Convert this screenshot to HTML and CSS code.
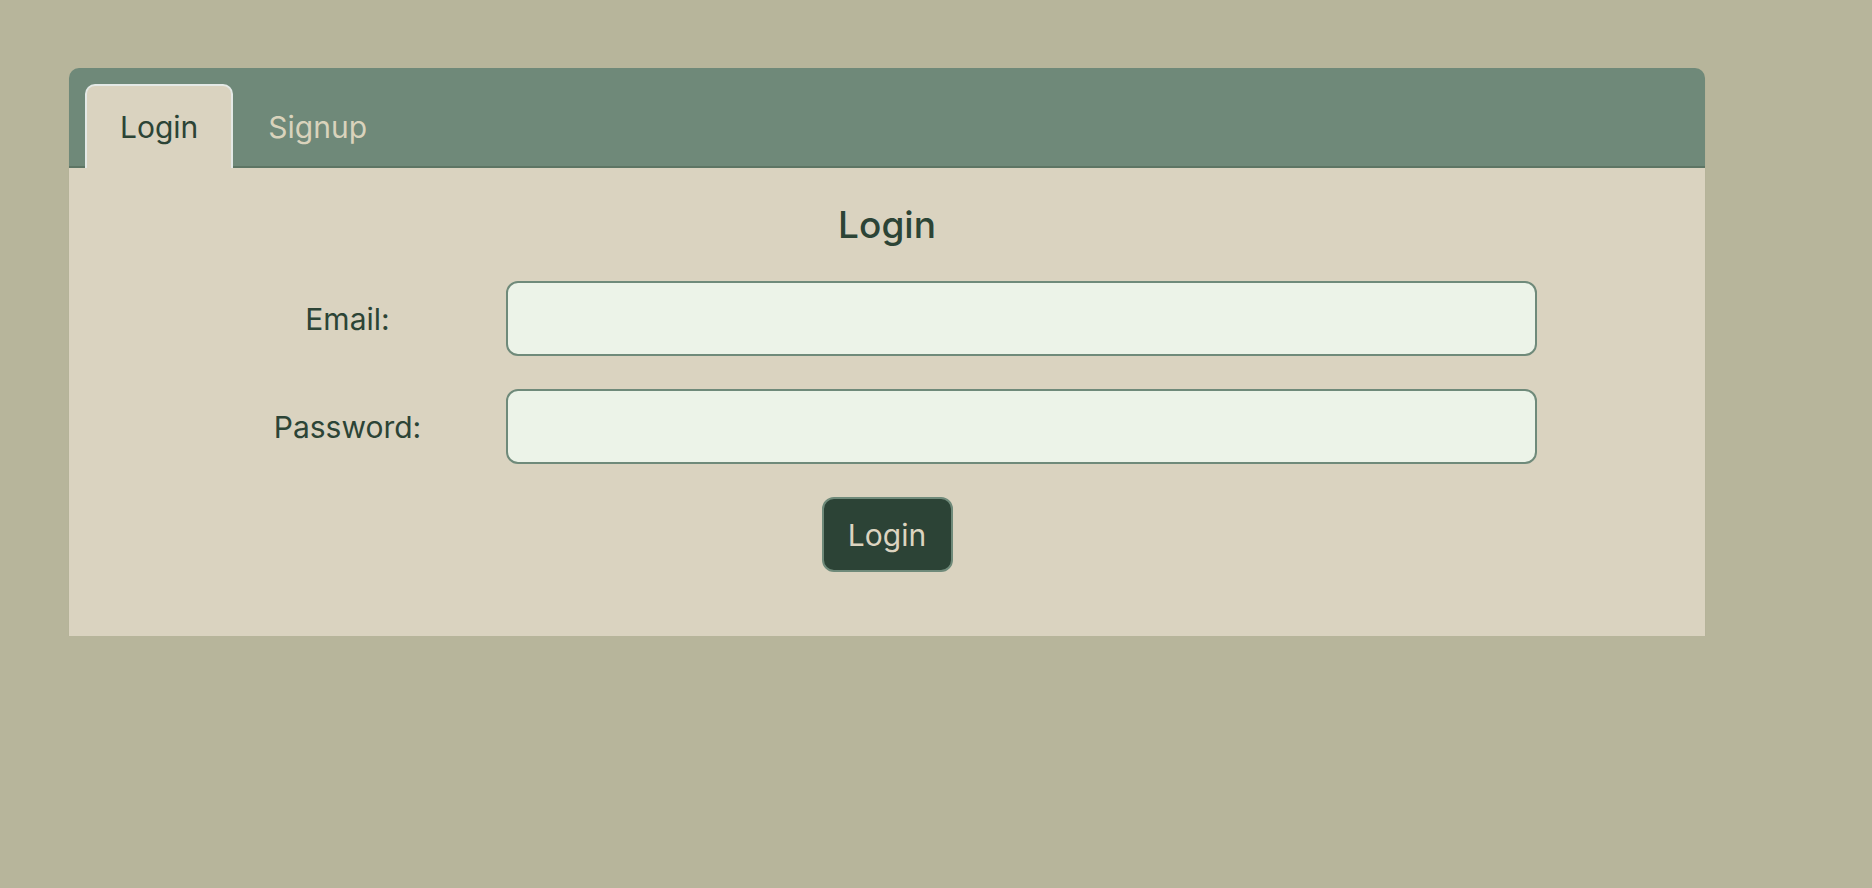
FILE: index.html
```html
<!DOCTYPE html>
<html lang="en">
<head>
<meta charset="utf-8">
<title>Login</title>
<link rel="stylesheet" href="styles.css">
</head>
<body>
<div class="page">
  <div class="card">
    <div class="tabs">
      <div class="tab active">Login</div>
      <div class="tab">Signup</div>
    </div>
    <div class="panel">
      <h2 class="title">Login</h2>
      <form class="form">
        <label class="label" for="email">Email:</label>
        <input class="input" id="email" type="email">
        <label class="label" for="password">Password:</label>
        <input class="input" id="password" type="password">
        <button class="btn" type="button">Login</button>
      </form>
    </div>
  </div>
</div>
</body>
</html>
```
FILE: styles.css
```css
* { box-sizing: border-box; }
html, body { margin: 0; }
body {
  background: #b7b59b;
  font-family: Inter, "Noto Sans", sans-serif;
  color: #2c4436;
}
.page { padding: 68px 0 0 69px; }
.card {
  width: 1636px;
  box-shadow: 0 1px 1px rgba(0,0,0,0.08);
  border-radius: 10px 10px 0 0;
}
.tabs {
  height: 100px;
  background: #6f8979;
  border-bottom: 2px solid #5d7564;
  border-radius: 10px 10px 0 0;
  padding: 16px 16px 0;
  display: flex;
  align-items: flex-end;
}
.tab {
  height: 84px;
  margin-bottom: -2px;
  padding: 0 33px;
  border: 2px solid transparent;
  border-bottom: none;
  border-radius: 10px 10px 0 0;
  display: flex;
  align-items: center;
  font-size: 30px;
  color: #d9d3bc;
}
.tab.active {
  background: #dad3c0;
  border-color: #e4e9e6;
  color: #2c4436;
}
.panel {
  background: #dad3c0;
  height: 468px;
  padding: 35px 0 65px;
}
.title {
  margin: 0 0 34px;
  text-align: center;
  font-size: 37px;
  line-height: 1.2;
  font-weight: 500;
}
.form {
  width: 1300px;
  margin: 0 auto;
  display: grid;
  grid-template-columns: 221px 1031px;
  column-gap: 48px;
  row-gap: 33px;
  align-items: center;
}
.label {
  text-align: center;
  font-size: 30px;
}
.input {
  height: 75px;
  background: #ecf3e8;
  border: 2px solid #6f8a7a;
  border-radius: 12px;
  font-size: 28px;
  padding: 0 16px;
  outline: none;
}
.btn {
  grid-column: 1 / -1;
  justify-self: center;
  width: 131px;
  height: 75px;
  background: #2c4336;
  border: 2px solid #6f8a7a;
  border-radius: 12px;
  color: #dcd4c0;
  font-family: inherit;
  font-size: 30px;
}
```
